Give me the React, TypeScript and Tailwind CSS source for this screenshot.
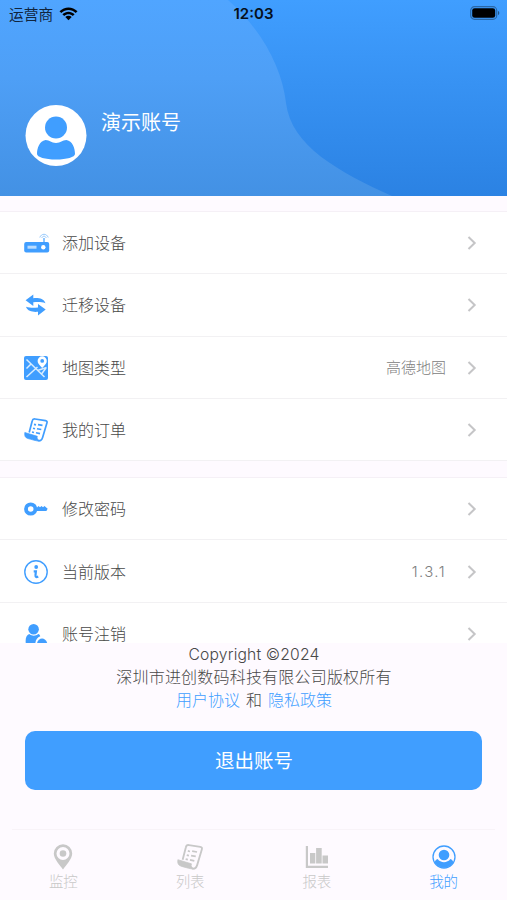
import type { ReactNode } from "react";

type Row = {
  label: string;
  icon: ReactNode;
  value?: string;
  valueClass?: string;
};

function StatusBar() {
  return (
    <div className="grid h-7 grid-cols-3 items-center pl-[9px] pr-[7px] text-black">
      <div className="flex items-center gap-[6px]">
        <span className="pt-px text-[14.7px] leading-5 text-[#10253d]">运营商</span>
        <svg className="-mt-px" width="19" height="14" viewBox="0 0 19 14">
          <path d="M.5 4.3C5.6-.8 13.4-.8 18.5 4.3L16.7 6.1C12.7 2.1 6.3 2.1 2.3 6.1Z" />
          <path d="M3.4 7.2C6.9 3.8 12.1 3.8 15.6 7.2L13.8 9C11.3 6.6 7.7 6.6 5.2 9Z" />
          <path d="M6.3 10.1C8.2 8.4 10.8 8.4 12.7 10.1L9.5 13.3Z" />
        </svg>
      </div>
      <div className="pr-[2px] text-center text-[15px] font-semibold leading-5 text-[#06101c]">12:03</div>
      <svg className="-mt-[2px] justify-self-end" width="30" height="14" viewBox="0 0 30 14">
        <rect x=".7" y=".7" width="26" height="12.6" rx="3.8" fill="none" stroke="#235689" strokeOpacity=".75" strokeWidth="1.2" />
        <rect x="2.2" y="2.2" width="23" height="9.6" rx="2.4" />
        <path d="M28 5v4c1.7-.5 1.7-3.500 0-4Z" fill="#235689" />
      </svg>
    </div>
  );
}

function Header() {
  return (
    <header className="relative h-[196px] shrink-0 overflow-hidden bg-linear-to-b from-[#409eff] to-[#2b82e3]">
      <svg className="absolute inset-0" width="507" height="196" viewBox="0 0 507 196">
        <defs>
          <linearGradient id="wave" x1="0" y1="0" x2="0" y2="1">
            <stop offset="0" stopColor="#50a5ff" />
            <stop offset=".4" stopColor="#4e9ff6" />
            <stop offset="1" stopColor="#4391e4" />
          </linearGradient>
        </defs>
        <path d="M0 0H228C262 30 282 68 286 103C291 146 339 172 392 196H0Z" fill="url(#wave)" />
      </svg>
      <div className="relative">
        <StatusBar />
        <div className="mt-[77px] flex gap-[14px] pl-[25px]">
          <svg width="62" height="61" viewBox="0 0 62 61">
            <circle cx="31" cy="30.500" r="30.500" fill="#fff" />
            <circle cx="31" cy="22.500" r="11" fill="#409eff" />
            <path d="M20.500 35C25 35 26 38 31 38S37 35 41.500 35C47.500 36 50 43 50 49C50 52 42 54.500 31 54.500S12 52 12 49C12 43 14.500 36 20.500 35Z" fill="#409eff" />
          </svg>
          <h1 className="mt-1 text-[20px] leading-7 text-white">演示账号</h1>
        </div>
      </div>
    </header>
  );
}

function RouterIcon() {
  return (
    <svg width="26" height="20" viewBox="0 0 26 20">
      <rect x=".2" y="9" width="25" height="10.500" rx="2" fill="#409eff" />
      <rect x="3.500" y="12.700" width="9" height="3" fill="#b9dcff" />
      <circle cx="19.300" cy="14.200" r="2.200" fill="#fff" />
      <g fill="none" stroke="#8cc3fa">
        <path d="M20 10V5" stroke="#409eff" strokeWidth="1.200" />
        <path d="M15.800 4.500C17.200.2 22.800.2 24.200 4.500M17.800 5C18.500 2.600 21.500 2.600 22.200 5" strokeWidth=".9" />
      </g>
    </svg>
  );
}

function TransferIcon() {
  return (
    <svg className="ml-[1px]" width="22" height="22" viewBox="0 0 22 22" fill="#409eff">
      <path d="M.6 6.200L8.300.4V4.200C13.500 3.800 18.500 4.200 20.500 9.200C16.500 7.900 13 7.900 8.300 8.300V11.900Z" />
      <path d="M20.700 15.600L13 21.400V17.800C8 18.200 2.800 17.600 1 12.800C5 14.100 8.300 14 13 13.600V9.900Z" />
    </svg>
  );
}

function MapIcon() {
  return (
    <svg width="24" height="24" viewBox="0 0 24 24">
      <rect width="24" height="24" rx="2" fill="#409eff" />
      <path d="M2.500 3.500L20.500 21M2.500 21L13.500 11M2.500 12.500L7 8M13.500 14.500L22.500 11.500M17.500 18L22 12" fill="none" stroke="#d9edff" strokeWidth="1.500" />
      <path d="M18.200 12C15.500 8.800 13.600 7.200 13.600 4.900A4.600 4.600 0 0 1 22.800 4.900C22.800 7.200 20.900 8.800 18.200 12Z" fill="#fff" />
      <circle cx="18.200" cy="4.900" r="1.900" fill="#409eff" />
    </svg>
  );
}

function ReceiptIcon({ size = 24 }: { size?: number }) {
  return (
    <svg width={size} height={size} viewBox="0 0 24 24" fill="none" stroke="currentColor">
      <path d="M5.200 14.500L8.200 3C8.500 1.500 9.500.8 11 1L21.500 2.700C23 3 23.300 3.800 22.900 5L18.600 19.500C17.800 22.200 16.200 23.200 14 22.500" strokeWidth="1.700" />
      <path d="M.8 14.500L13.300 18.300C12.500 20.500 13.700 22.200 15.800 22.800C14 23.400 11.700 22.700 3.800 20.500C1.200 19.700.3 17.800.8 14.500Z" fill="currentColor" strokeWidth=".7" />
      <path d="M10 6.400L12 6.900M14 6.600L18.500 7.400M9 10.200L11 10.700M13 10.700L17.300 11.500M8 14L10 14.500M12 14.700L16 15.600" strokeWidth="1.600" />
    </svg>
  );
}

function KeyIcon() {
  return (
    <svg width="24" height="14" viewBox="0 0 24 14">
      <circle cx="6.700" cy="7" r="4.700" fill="none" stroke="#409eff" strokeWidth="3.800" />
      <path d="M11 5.500H13L14.500 4.100L16 5.300L17.500 4L19 5.300L20.500 4L23.700 6.800L22.400 9H11Z" fill="#409eff" />
    </svg>
  );
}

function InfoIcon() {
  return (
    <svg width="24" height="24" viewBox="0 0 24 24" fill="none" stroke="#409eff">
      <circle cx="12" cy="12" r="11.200" strokeWidth="1.400" />
      <circle cx="12.200" cy="7" r="1.900" fill="#409eff" stroke="none" />
      <path d="M9.700 11.300H11.900L11.500 15.200C11.300 17.300 12.500 17.500 14.200 16.500" strokeWidth="2.200" />
    </svg>
  );
}

function UserOffIcon() {
  return (
    <svg className="ml-[1px]" width="23" height="20" viewBox="0 0 23 20" fill="#409eff">
      <circle cx="8.600" cy="5.300" r="5.300" />
      <path d="M4.200 10C7.200 12.200 10.500 12.200 13.300 10C14.300 10.300 15 11 15.300 12.300C12.300 13.500 10.700 15.500 10.300 19.500H.8C.2 14.500 1.200 11.200 4.200 10Z" />
      <path d="M12 19.500C13 12.700 21 12.700 22.300 19.500Z" />
    </svg>
  );
}

const deviceRows: Row[] = [
  { label: "添加设备", icon: <RouterIcon /> },
  { label: "迁移设备", icon: <TransferIcon /> },
  { label: "地图类型", icon: <MapIcon />, value: "高德地图" },
  { label: "我的订单", icon: <ReceiptIcon /> },
];

const accountRows: Row[] = [
  { label: "修改密码", icon: <KeyIcon /> },
  { label: "当前版本", icon: <InfoIcon />, value: "1.3.1", valueClass: "tracking-[1.4px]" },
  { label: "账号注销", icon: <UserOffIcon /> },
];

function MenuRow({ row }: { row: Row }) {
  return (
    <div className="flex h-[62.3px] shrink-0 items-center border-b border-[#f2f1f3] pl-6 pr-[30px] pt-px">
      <div className="flex w-[38px] items-center text-[#409eff]">{row.icon}</div>
      <span className="text-base font-light text-[#484848]">{row.label}</span>
      <span className="ml-auto mr-[21px] pt-px text-[15px] font-light text-[#808080]">
        <span className={row.valueClass}>{row.value}</span>
      </span>
      <svg width="10" height="14" viewBox="0 0 10 14" fill="none" stroke="#c5c5c7" strokeWidth="2">
        <path d="M1.500 1L7.700 7L1.500 13" />
      </svg>
    </div>
  );
}

const tabs = [
  {
    label: "监控",
    icon: (
      <svg width="20" height="26" viewBox="0 0 20 26" fill="currentColor">
        <path fillRule="evenodd" d="M10 25.500C7 21 .8 15 .8 9.500A9.200 9.200 0 0 1 19.200 9.500C19.200 15 13 21 10 25.500ZM10 3A6.500 6.500 0 1 0 10 16A6.500 6.500 0 0 0 10 3Z" />
        <circle cx="10" cy="9.500" r="3.300" />
      </svg>
    ),
  },
  { label: "列表", icon: <ReceiptIcon size={26} /> },
  {
    label: "报表",
    icon: (
      <svg width="24" height="24" viewBox="0 0 24 24" fill="currentColor">
        <path d="M.8 1H3V20.800H23V23H.8ZM5 8H10.300V18.500H5ZM11.100 3H16.700V18.500H11.100ZM17.500 10.500H23V18.500H17.500Z" />
      </svg>
    ),
  },
  {
    label: "我的",
    active: true,
    icon: (
      <svg width="24" height="24" viewBox="0 0 24 24" fill="currentColor">
        <circle cx="12" cy="12" r="11" fill="none" stroke="currentColor" strokeWidth="1.300" />
        <circle cx="12" cy="10" r="5.300" />
        <path d="M5.700 14C8.500 18.200 15.500 18.200 18.300 14C20 14.500 21 15.800 21.300 17.200C16.700 24.500 7.300 24.500 2.700 17.200C3 15.800 4 14.500 5.700 14Z" />
      </svg>
    ),
  },
];

export default function App() {
  return (
    <div className="flex h-[900px] w-[507px] flex-col overflow-hidden bg-[#fefaff] font-[Inter,'Noto_Sans_CJK_SC',sans-serif]">
      <Header />

      {/* menu sections, the last row is cut by the footer */}
      <main className="h-[447px] shrink-0 overflow-hidden pt-[15px]">
        <section className="border-t border-[#f5f0f6] bg-white">
          {deviceRows.map((row) => (
            <MenuRow key={row.label} row={row} />
          ))}
        </section>
        <section className="mt-4 border-t border-[#f5f0f6] bg-white">
          {accountRows.map((row) => (
            <MenuRow key={row.label} row={row} />
          ))}
        </section>
      </main>

      <footer className="h-[88px] shrink-0 text-center text-base font-light leading-[23px] text-[#484848]">
        <p className="pl-px text-[15.7px] tracking-[0.15px]">Copyright ©2024</p>
        <p className="pl-px tracking-[0.2px]">深圳市进创数码科技有限公司版权所有</p>
        <p className="pl-px">
          <a className="text-[#409eff]">用户协议</a>
          <span className="mx-[6px]">和</span>
          <a className="text-[#409eff]">隐私政策</a>
        </p>
      </footer>

      <button className="mx-[25px] h-[59px] shrink-0 rounded-[10px] bg-[#409eff] pl-px pt-[3px] text-[19.5px] text-white">
        退出账号
      </button>

      <div className="mx-3 mt-[39px] h-px shrink-0 bg-[#f8f3f8]" />
      <nav className="grid grid-cols-4">
        {tabs.map((tab) => (
          <div
            key={tab.label}
            className={
              tab.active
                ? "flex flex-col items-center pt-[14px] text-[#409eff]"
                : "flex flex-col items-center pt-[14px] text-[#c8c8c8]"
            }
          >
            <div className="flex h-[26px] items-center">{tab.icon}</div>
            <span className="pt-px text-[14.5px] font-light leading-[22px]">{tab.label}</span>
          </div>
        ))}
      </nav>
    </div>
  );
}
